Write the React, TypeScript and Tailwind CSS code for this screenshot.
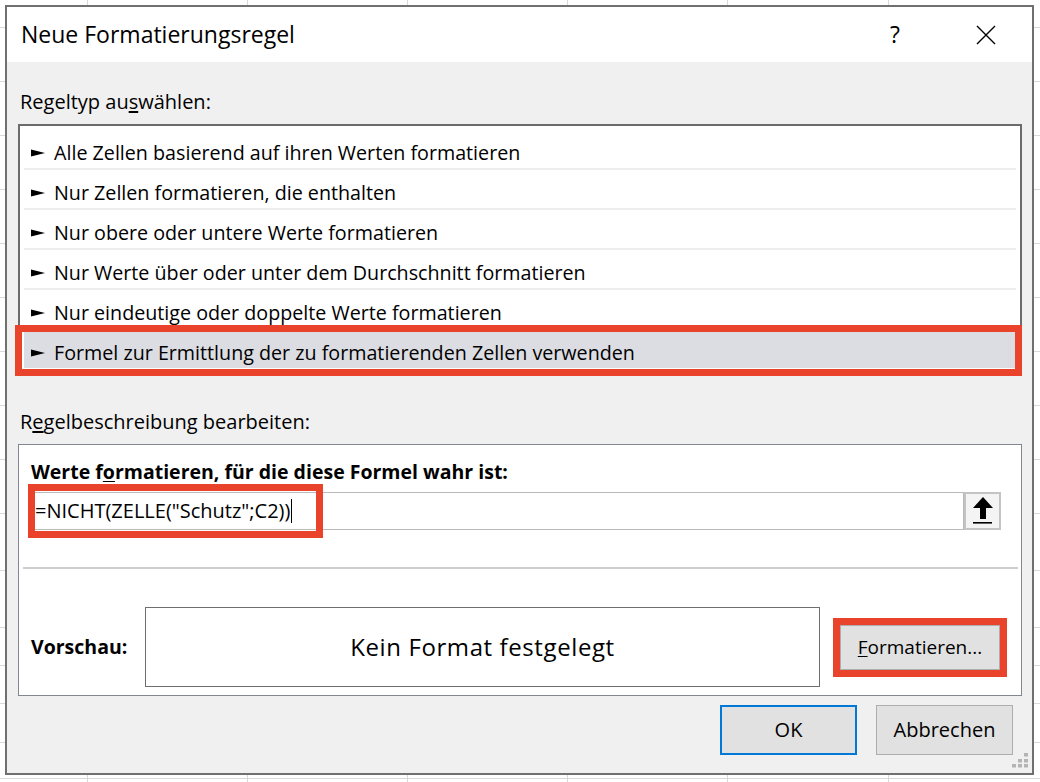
import React from "react";

const ruleTypes = [
  "Alle Zellen basierend auf ihren Werten formatieren",
  "Nur Zellen formatieren, die enthalten",
  "Nur obere oder untere Werte formatieren",
  "Nur Werte über oder unter dem Durchschnitt formatieren",
  "Nur eindeutige oder doppelte Werte formatieren",
  "Formel zur Ermittlung der zu formatierenden Zellen verwenden",
];

// spreadsheet grid behind the dialog
const gridCols = [87, 247, 407, 567, 727, 888];
const gridRows = [27, 81, 135, 189, 243, 297, 351, 405, 459, 513, 570, 627, 665, 703, 742, 778];

function SheetGrid() {
  return (
    <>
      {gridCols.map((x) => (
        <div key={`c${x}`} className="absolute top-0 h-full w-px bg-[#d9d9d9]" style={{ left: x }} />
      ))}
      {gridRows.map((y) => (
        <div key={`r${y}`} className="absolute left-0 h-px w-full bg-[#d9d9d9]" style={{ top: y }} />
      ))}
    </>
  );
}

function RowArrow() {
  return (
    <svg width="14" height="8" viewBox="0 0 14 8" className="shrink-0">
      <path d="M0 0.5 L14 4 L0 7.5 Z" fill="#000" />
    </svg>
  );
}

function RedFrame({ className }: { className: string }) {
  return <span className={`pointer-events-none absolute border-[7px] border-[#e9432b] ${className}`} />;
}

export default function App() {
  return (
    <div className="relative h-[782px] w-[1040px] overflow-hidden bg-white font-['Open_Sans',sans-serif] text-black">
      <SheetGrid />

      {/* Dialog window */}
      <div className="absolute left-[5px] top-[5px] flex h-[770px] w-[1029px] flex-col border-2 border-[#707070] bg-[#f0f0f0]">
        {/* Title bar */}
        <div className="flex h-[55px] shrink-0 items-center bg-white pl-[14px]">
          <span className="text-[23px] leading-none">Neue Formatierungsregel</span>
          <span className="ml-auto w-[20px] text-center text-[23px] leading-none">?</span>
          <svg width="20" height="20" viewBox="0 0 20 20" className="ml-[71px] mr-[36px]">
            <path d="M1 1 L19 19 M19 1 L1 19" stroke="#000" strokeWidth="1.4" />
          </svg>
        </div>

        {/* Body */}
        <div className="flex flex-1 flex-col pl-[11px] pr-[10px]">
          <div className="mt-[28px] pl-[2px] text-[20px] leading-[24px]">
            Regeltyp au<u className="underline-offset-2">s</u>wählen:
          </div>

          {/* Rule type list */}
          <div className="mt-[10px] border-2 border-[#6b6b6b] bg-white px-[4px] py-[4px]">
            {ruleTypes.map((label, i) => {
              const selected = i === ruleTypes.length - 1;
              return (
                <div
                  key={label}
                  className={`relative h-[40px] border-b-2 pt-[11px] ${
                    selected ? "border-white bg-[#dcdde2]" : "border-[#eeeeee]"
                  }`}
                >
                  <div className="flex h-[24px] items-center gap-[9px] pl-[7px] text-[19.7px] leading-[24px]">
                    <RowArrow />
                    <span>{label}</span>
                  </div>
                  {selected && <RedFrame className="-left-[9px] -right-[6px] -top-[5px] -bottom-[8px]" />}
                </div>
              );
            })}
          </div>

          <div className="mt-[34px] pl-[2px] text-[20px] leading-[24px]">
            R<u className="underline-offset-2">e</u>gelbeschreibung bearbeiten:
          </div>

          {/* Rule description panel */}
          <div className="mt-[10px] flex flex-col border border-[#828790] bg-white pb-[8px]">
            <div className="pl-[12px] pt-[15px] text-[19.5px] font-bold leading-[24px]">
              Werte f<u className="underline-offset-2">o</u>rmatieren, für die diese Formel wahr ist:
            </div>

            <div className="ml-[10px] mr-[20px] mt-[8px] flex h-[38px]">
              <div className="relative flex flex-1 items-center border border-[#bababa] pl-[5px] text-[20px]">
                <span>=NICHT(ZELLE("Schutz";C2))</span>
                <span className="ml-[1px] h-[24px] w-px bg-black" />
                <RedFrame className="-left-[2px] -top-[9px] h-[54px] w-[295px]" />
              </div>
              <div className="flex w-[37px] items-center justify-center border-2 border-[#c4c4c4] bg-[#f4f4f4]">
                <svg width="22" height="30" viewBox="0 0 22 30">
                  <path d="M11 1 L21 12 L14 12 L14 23 L8 23 L8 12 L1 12 Z" fill="#000" />
                  <rect x="1" y="26" width="19" height="1.6" fill="#000" />
                </svg>
              </div>
            </div>

            <div className="ml-[4px] mr-[3px] mt-[37px] h-[2px] bg-[#cdcdcd]" />

            <div className="mt-[38px] flex h-[80px] items-center pl-[12px]">
              <span className="w-[114px] text-[19.5px] font-bold">Vorschau:</span>
              <div className="flex h-[80px] w-[675px] items-center justify-center border border-[#6e6e6e] bg-white text-[24px] tracking-[0.6px]">
                Kein Format festgelegt
              </div>
              <div className="relative ml-[20px] flex h-[45px] w-[160px] items-center justify-center border border-[#adadad] bg-[#e1e1e1] text-[19px]">
                <span>
                  <u className="underline-offset-2">F</u>ormatieren...
                </span>
                <RedFrame className="-inset-[8px]" />
              </div>
            </div>
          </div>

          {/* Dialog buttons */}
          <div className="mt-[9px] flex justify-end gap-[19px] pr-[9px]">
            <button className="flex h-[50px] w-[137px] items-center justify-center border-2 border-[#0078d7] bg-[#e1e1e1] text-[20px]">
              OK
            </button>
            <button className="flex h-[50px] w-[137px] items-center justify-center border border-[#adadad] bg-[#e1e1e1] text-[20px]">
              Abbrechen
            </button>
          </div>
        </div>

        {/* Size grip */}
        <svg width="17" height="16" viewBox="0 0 17 16" className="absolute bottom-[4px] right-[3px]">
          <g fill="#b4b4b4">
            <rect x="12" y="0" width="4" height="3.5" />
            <rect x="6" y="6" width="4" height="3.5" />
            <rect x="12" y="6" width="4" height="3.5" />
            <rect x="0" y="11" width="4" height="3.5" />
            <rect x="6" y="11" width="4" height="3.5" />
            <rect x="12" y="11" width="4" height="3.5" />
          </g>
        </svg>
      </div>
    </div>
  );
}
